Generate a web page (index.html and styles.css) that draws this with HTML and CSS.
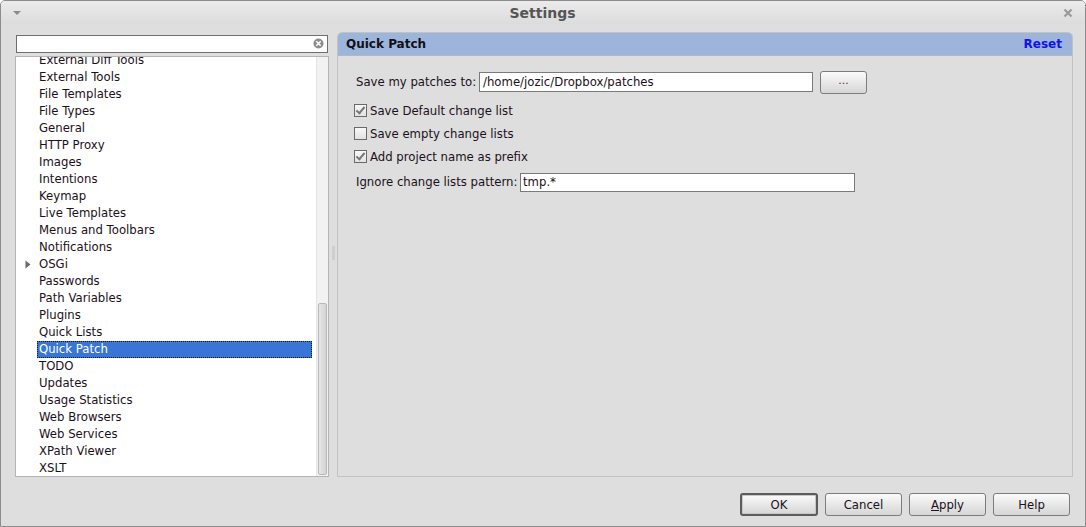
FILE: index.html
```html
<!DOCTYPE html>
<html>
<head>
<meta charset="utf-8">
<link rel="stylesheet" href="styles.css">
</head>
<body>
<div class="window">
  <div class="titlebar">
    <svg class="menu-arrow" width="10" height="6" viewBox="0 0 10 6"><path d="M1 1 L9 1 L5 5 Z" fill="#8a8a8a"/></svg>
    <div class="title">Settings</div>
    <svg class="close" width="10" height="10" viewBox="0 0 10 10"><path d="M1.5 1.5 L8.5 8.5 M8.5 1.5 L1.5 8.5" stroke="#9a9a9a" stroke-width="2.2"/></svg>
  </div>
  <div class="body">
    <div class="main">
      <div class="left">
        <div class="search">
          <svg class="clear" width="11" height="11" viewBox="0 0 11 11"><circle cx="5.5" cy="5.5" r="5" fill="#8c8c8c"/><path d="M3.3 3.3 L7.7 7.7 M7.7 3.3 L3.3 7.7" stroke="#fff" stroke-width="1.6"/></svg>
        </div>
        <div class="tree">
          <div class="items">
            <div class="item">External Diff Tools</div>
            <div class="item">External Tools</div>
            <div class="item">File Templates</div>
            <div class="item">File Types</div>
            <div class="item">General</div>
            <div class="item">HTTP Proxy</div>
            <div class="item">Images</div>
            <div class="item">Intentions</div>
            <div class="item">Keymap</div>
            <div class="item">Live Templates</div>
            <div class="item">Menus and Toolbars</div>
            <div class="item">Notifications</div>
            <div class="item"><svg class="expander" width="6" height="9" viewBox="0 0 6 9"><path d="M0.5 0.5 L5.5 4.5 L0.5 8.5 Z" fill="#6a6a6a"/></svg>OSGi</div>
            <div class="item">Passwords</div>
            <div class="item">Path Variables</div>
            <div class="item">Plugins</div>
            <div class="item">Quick Lists</div>
            <div class="item selected">Quick Patch</div>
            <div class="item">TODO</div>
            <div class="item">Updates</div>
            <div class="item">Usage Statistics</div>
            <div class="item">Web Browsers</div>
            <div class="item">Web Services</div>
            <div class="item">XPath Viewer</div>
            <div class="item">XSLT</div>
          </div>
          <div class="scrollbar"><div class="thumb"></div></div>
        </div>
      </div>
      <div class="splitter"><div class="grip"></div></div>
      <div class="panel">
        <div class="panel-head">
          <span class="panel-title">Quick Patch</span>
          <span class="reset">Reset</span>
        </div>
        <div class="panel-body">
          <div class="row path-row">
            <span class="label">Save my patches to:</span>
            <div class="field path-field">/home/jozic/Dropbox/patches</div>
            <div class="btn browse">...</div>
          </div>
          <div class="check-row"><span class="cb checked"></span>Save Default change list</div>
          <div class="check-row"><span class="cb"></span>Save empty change lists</div>
          <div class="check-row"><span class="cb checked"></span>Add project name as prefix</div>
          <div class="row pattern-row">
            <span class="label">Ignore change lists pattern:</span>
            <div class="field pattern-field">tmp.*</div>
          </div>
        </div>
      </div>
    </div>
    <div class="footer">
      <div class="btn dlg default">OK</div>
      <div class="btn dlg">Cancel</div>
      <div class="btn dlg"><u>A</u>pply</div>
      <div class="btn dlg">Help</div>
    </div>
  </div>
</div>
</body>
</html>
```

FILE: styles.css
```css
* { box-sizing: border-box; }
html, body { margin: 0; padding: 0; }
body {
  width: 1086px;
  height: 527px;
  background: #ffffff;
  font-family: "DejaVu Sans", "Liberation Sans", sans-serif;
  font-size: 11.7px;
  color: #1c1020;
  overflow: hidden;
}
.window {
  width: 1086px;
  height: 527px;
  border: 1px solid #8c8c8c;
  border-radius: 5px 5px 0 0;
  background: #dedede;
  display: flex;
  flex-direction: column;
  overflow: hidden;
}
.titlebar {
  height: 23px;
  flex: none;
  background: linear-gradient(#ebebeb, #dcdcdc);
  display: flex;
  align-items: center;
  padding: 0 11px 0 11px;
}
.menu-arrow { flex: none; margin-top: 1px; }
.title {
  flex: 1;
  text-align: center;
  font-weight: bold;
  font-size: 14px;
  color: #555555;
  margin-top: 1px;
}
.close { flex: none; margin-right: 1px; }
.body {
  flex: 1;
  display: flex;
  flex-direction: column;
  padding: 8px 13px 0 14px;
}
.main {
  display: flex;
  height: 445px;
}
.left {
  width: 314px;
  flex: none;
  display: flex;
  flex-direction: column;
  padding-top: 3px;
}
.search {
  height: 18px;
  margin: 0 1px;
  background: #ffffff;
  border: 1px solid #6f6f6f;
  position: relative;
}
.clear { position: absolute; right: 3px; top: 2px; }
.tree {
  margin-top: 3px;
  height: 422px;
  background: #ffffff;
  border: 1px solid #b4b4b4;
  display: flex;
  overflow: hidden;
}
.items {
  flex: 1;
  margin-top: -5px;
}
.item {
  height: 17px;
  line-height: 17px;
  padding-left: 23px;
  position: relative;
  white-space: nowrap;
}
.item.selected {
  background: #3875d7;
  color: #ffffff;
  margin-left: 21px;
  margin-right: 4px;
  padding-left: 2px;
  outline: 1px dotted #1a1a1a;
  outline-offset: -1px;
}
.expander { position: absolute; left: 9px; top: 4px; }
.scrollbar {
  width: 12px;
  flex: none;
  background: #f2f2f2;
  border-left: 1px solid #e4e4e4;
  display: flex;
  flex-direction: column;
  justify-content: flex-end;
  padding: 0 1px 1px 1px;
}
.thumb {
  height: 172px;
  border: 1px solid #b8b8b8;
  border-radius: 2px;
  background: linear-gradient(90deg, #e6e6e6, #d4d4d4);
}
.splitter {
  width: 8px;
  flex: none;
  display: flex;
  align-items: center;
  justify-content: center;
}
.grip {
  width: 3px;
  height: 14px;
  background-image: radial-gradient(circle, #bdbdbd 0.6px, transparent 0.8px);
  background-size: 2px 2px;
  margin-top: -4px;
}
.panel {
  width: 736px;
  flex: none;
  border: 1px solid #c2c2c2;
  border-radius: 5px 5px 0 0;
  display: flex;
  flex-direction: column;
}
.panel-head {
  height: 23px;
  flex: none;
  background: #9db5db;
  border-radius: 4px 4px 0 0;
  border-bottom: 1px solid #b0b8c4;
  display: flex;
  align-items: center;
  justify-content: space-between;
  padding: 0 10px 0 8px;
  font-weight: bold;
  font-size: 12px;
}
.panel-title { color: #101018; }
.reset { color: #1010f0; }
.panel-body {
  flex: 1;
  padding: 15px 0 0 16px;
}
.row { display: flex; align-items: center; }
.label { flex: none; white-space: nowrap; }
.path-row { height: 22px; margin-bottom: 6px; }
.path-row .label { margin-left: 2px; width: 123px; }
.field {
  background: #ffffff;
  border: 1px solid #7a7a7a;
  height: 20px;
  line-height: 18px;
  padding-left: 3px;
  white-space: nowrap;
}
.path-field { width: 334px; }
.btn {
  border: 1px solid #7c7c7c;
  border-radius: 3px;
  background: linear-gradient(#fbfbfb, #e4e4e4 60%, #d6d6d6);
  display: flex;
  align-items: center;
  justify-content: center;
}
.browse {
  width: 47px;
  height: 23px;
  margin-left: 7px;
  color: #6a3030;
  font-size: 11px;
  padding-bottom: 3px;
}
.check-row {
  height: 23px;
  display: flex;
  align-items: center;
}
.cb {
  width: 13px;
  height: 13px;
  border: 1px solid #6a6a6a;
  background: linear-gradient(#f8f8f8, #e2e2e2);
  margin-right: 3px;
  position: relative;
  flex: none;
}
.cb.checked::after {
  content: "";
  position: absolute;
  left: 3px;
  top: 0px;
  width: 3px;
  height: 7px;
  border: solid #777777;
  border-width: 0 2px 2px 0;
  transform: rotate(40deg);
}
.pattern-row { height: 20px; margin-top: 4px; }
.pattern-row .label { margin-left: 2px; width: 164px; }
.pattern-field { width: 335px; height: 19px; line-height: 17px; padding-left: 2px; }
.footer {
  flex: 1;
  display: flex;
  justify-content: flex-end;
  align-items: flex-start;
  padding-top: 16px;
  padding-right: 2px;
  gap: 7px;
}
.dlg {
  width: 77px;
  height: 23px;
  color: #1c1020;
}
.dlg.default {
  width: 78px;
  border: 2px solid #5c5c5c;
  box-shadow: inset 0 0 0 1px #c8c8c8;
}
```
